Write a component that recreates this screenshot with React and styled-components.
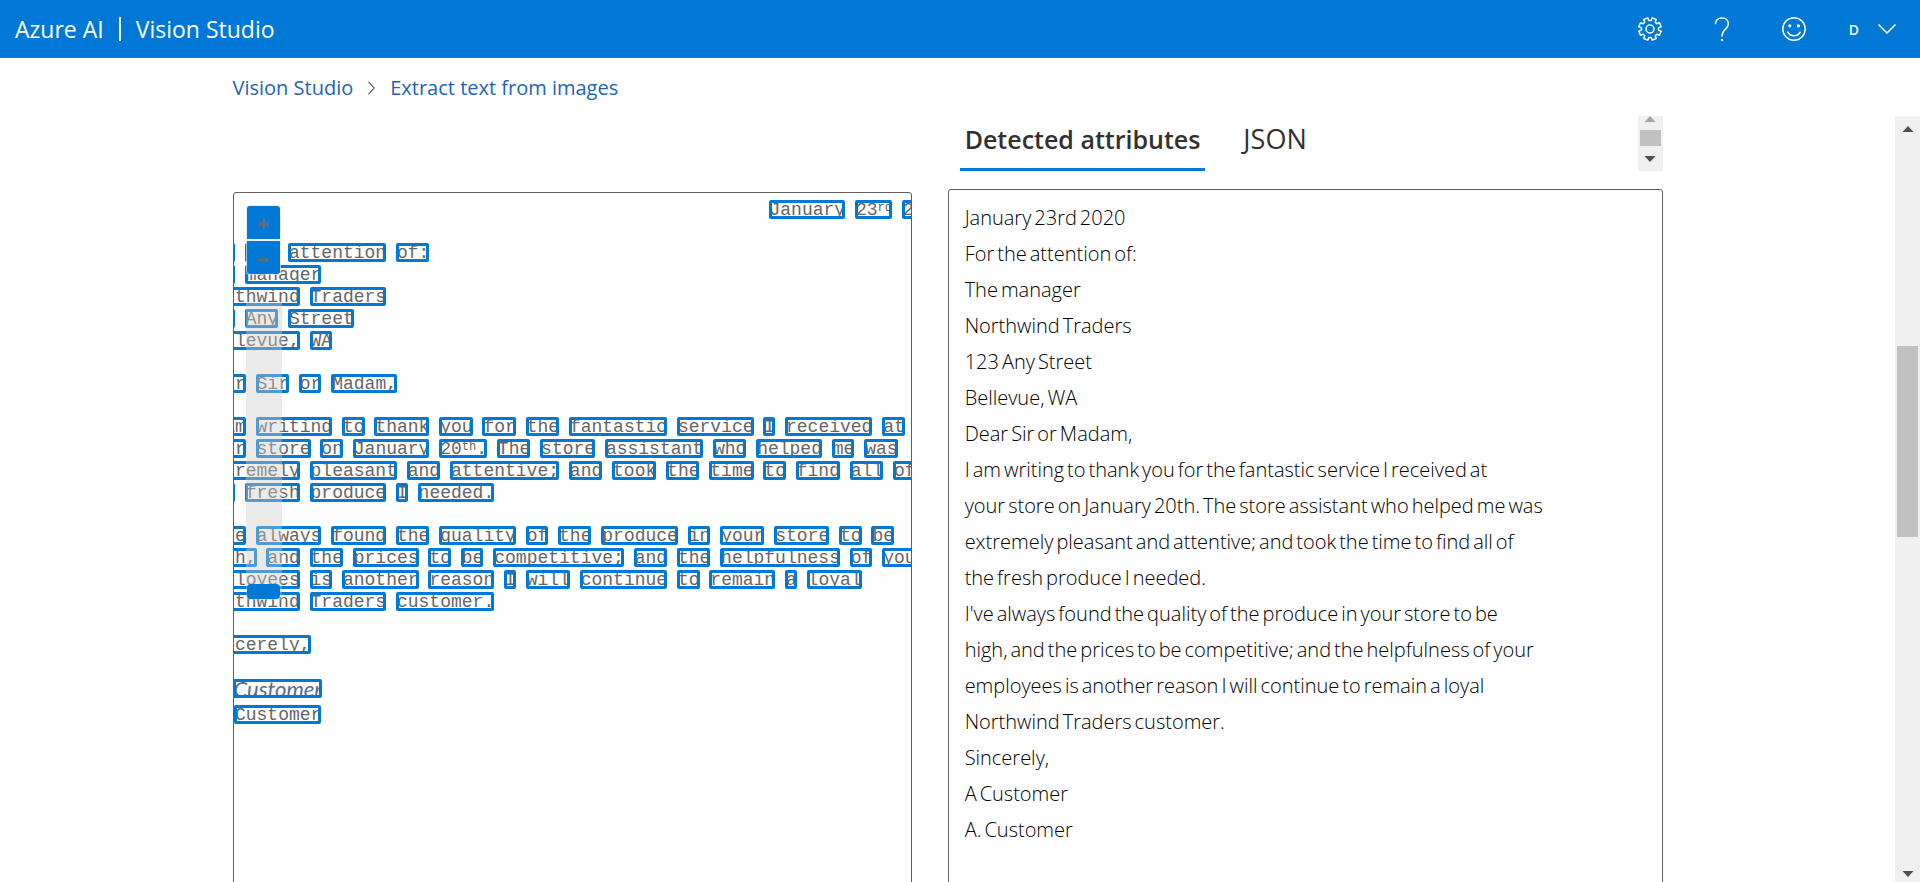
import React from "react";
import styled, { createGlobalStyle } from "styled-components";

const BLUE = "#0078d6";

const GlobalStyle = createGlobalStyle`
  * { box-sizing: border-box; }
  body {
    margin: 0;
    background: #fff;
    color: #323130;
    font-family: "Open Sans", "Noto Sans", sans-serif;
    overflow: hidden;
  }
  button { font: inherit; border: 0; padding: 0; background: none; color: inherit; cursor: pointer; }
`;

const Shell = styled.div`
  height: 100vh;
  display: flex;
  flex-direction: column;
`;

const Header = styled.header`
  flex: none;
  height: 58px;
  display: flex;
  align-items: center;
  justify-content: space-between;
  padding: 0 24px 0 15px;
  background: ${BLUE};
  color: #fff;
`;

const Brand = styled.div`
  display: flex;
  align-items: center;
  gap: 15px;
  font-size: 23px;
  line-height: 30px;
`;

const BrandDivider = styled.span`
  width: 2px;
  height: 24px;
  background: #fff;
`;

const HeaderActions = styled.div`
  display: flex;
  align-items: center;
  gap: 43px;
`;

const IconGroup = styled.div`
  display: flex;
  gap: 48px;
`;

const IconButton = styled.button`
  width: 24px;
  height: 24px;
  display: flex;
  align-items: center;
  justify-content: center;
`;

const AccountButton = styled.button`
  display: flex;
  align-items: center;
  gap: 19px;
  font-size: 14px;
  font-weight: 600;
`;

const Breadcrumb = styled.nav`
  flex: none;
  width: 100%;
  height: 58px;
  padding: 2px 25px 0 0;
  display: flex;
  justify-content: center;
`;

const Crumbs = styled.div`
  width: 100%;
  max-width: 1430px;
  display: flex;
  align-items: center;
  gap: 15px;
  font-size: 20px;
  line-height: 28px;
`;

const Crumb = styled.a`
  color: #1c64b8;
  text-decoration: none;
`;

const Viewport = styled.div`
  flex: 1;
  min-height: 0;
  display: flex;
`;

const Main = styled.main`
  flex: 1;
  min-width: 0;
  overflow: hidden;
  display: flex;
  justify-content: center;
  align-items: flex-start;
`;

const Columns = styled.div`
  width: 100%;
  max-width: 1430px;
  display: grid;
  grid-template-columns: minmax(0, 19fr) minmax(0, 20fr);
  column-gap: 36px;
`;

const PreviewColumn = styled.section`
  padding-top: 76px;
`;

const ResultColumn = styled.section`
  display: flex;
  flex-direction: column;
  gap: 18px;
`;

const Panel = styled.div`
  min-height: 860px;
  border: 1px solid #5f5e5d;
  border-radius: 3px;
  background: #fefefe;
`;

const ImagePanel = styled(Panel)`
  position: relative;
  overflow: hidden;
  padding-top: 6px;
`;

const Letter = styled.div`
  margin-left: -31px;
  display: flex;
  flex-direction: column;
  gap: 21px;
  color: #666;
  font-family: "Liberation Mono", monospace;
  font-size: 18px;
  line-height: 22px;
  white-space: pre;
`;

const Paragraph = styled.p`
  margin: 0;
`;

const LetterDate = styled(Paragraph)`
  padding-left: 567px;
`;

const LetterLine = styled.span`
  display: block;
  height: 22px;
`;

const Signature = styled.span`
  display: block;
  height: 27px;
  padding: 1px 0 0 12px;
  color: #5a6a92;
  font-family: Lato, sans-serif;
  font-size: 22px;
  font-style: italic;
`;

const WordBox = styled.span`
  position: relative;
  display: inline-block;
  height: 22px;

  &::after {
    content: "";
    position: absolute;
    inset: 1px 0 2px -1px;
    border: 3px solid ${BLUE};
    border-radius: 2px;
  }
`;

const Ordinal = styled.span`
  position: relative;
  top: -4px;
  font-size: 12px;
`;

const ZoomButtons = styled.div`
  position: absolute;
  top: 12px;
  left: 12px;
  display: flex;
  flex-direction: column;
  gap: 2px;
  padding: 1px;
  border-radius: 4px;
  background: rgba(230, 230, 230, 0.7);
`;

const ZoomButton = styled.button`
  width: 33px;
  height: 33px;
  border-radius: ${(p) => (p.$end === "top" ? "3px 3px 0 0" : "0 0 3px 3px")};
  background: ${BLUE};
  color: #6b6b6b;
  font-size: 22px;
  font-weight: 700;
  line-height: 33px;
`;

const ZoomSlider = styled.input`
  position: absolute;
  top: 110px;
  left: 12px;
  width: 36px;
  height: 297px;
  margin: 0;
  padding: 1px;
  appearance: none;
  writing-mode: vertical-lr;
  background: rgba(205, 205, 205, 0.4);

  &::-webkit-slider-thumb {
    appearance: none;
    width: 33px;
    height: 15px;
    border-radius: 4px;
    background: ${BLUE};
  }
`;

const TabBar = styled.div`
  height: 55px;
  display: flex;
  justify-content: space-between;
`;

const TabList = styled.div`
  display: flex;
  gap: 33px;
  padding-left: 12px;
`;

const Tab = styled.button`
  height: 55px;
  padding: 0 5px 7px;
  border-bottom: 3px solid ${(p) => (p.$active ? BLUE : "transparent")};
  color: #323130;
  font-size: ${(p) => (p.$active ? "25px" : "27px")};
  font-weight: ${(p) => (p.$active ? 600 : 400)};
  line-height: 34px;
`;

const TextPanel = styled(Panel)`
  padding: 10px 16px;
  color: #000;
  font-size: 20px;
  font-weight: 300;
`;

const TextLines = styled.ol`
  list-style: none;
  margin: 0;
  padding: 0;
`;

const TextLine = styled.li`
  display: flex;
  flex-wrap: wrap;
  column-gap: 3px;
  line-height: 36px;
`;

const ScrollTrack = styled.div`
  flex: none;
  width: 25px;
  display: flex;
  flex-direction: column;
  background: #f0f0f0;
`;

const ScrollArrow = styled.button`
  flex: none;
  height: ${(p) => p.$size}px;
  display: flex;
  align-items: center;
  justify-content: center;
`;

const ScrollSpace = styled.div`
  flex: ${(p) => p.$grow};
`;

const ScrollThumb = styled.div`
  flex: ${(p) => p.$grow};
  margin: 0 2px;
  background: #c1c1c1;
`;

const gearPoints = Array.from({ length: 8 }, (_, i) => {
  const mid = 22.5 + i * 45;
  return [[-15, 8.6], [-11, 11.4], [11, 11.4], [15, 8.6]]
    .map(([offset, r]) => {
      const a = ((mid + offset) * Math.PI) / 180;
      return `${(12 + r * Math.sin(a)).toFixed(2)},${(12 - r * Math.cos(a)).toFixed(2)}`;
    })
    .join(" ");
}).join(" ");

function GearIcon() {
  return (
    <svg width="24" height="24" viewBox="0 0 24 24" fill="none" stroke="#fff" strokeWidth="1.5" strokeLinejoin="round" aria-hidden="true">
      <polygon points={gearPoints} />
      <circle cx="12" cy="12" r="4" />
    </svg>
  );
}

function HelpIcon() {
  return (
    <svg width="16" height="24" viewBox="0 0 16 24" fill="none" stroke="#fff" strokeWidth="1.5" aria-hidden="true">
      <path d="M1.4 7.2C1.4 3.3 4.2 0.9 7.8 0.9C11.6 0.9 14.4 3.2 14.4 6.8C14.4 12.2 8 12 8 19.4" />
      <path d="M8 22v2" strokeWidth="2" />
    </svg>
  );
}

function SmileIcon() {
  return (
    <svg width="24" height="24" viewBox="0 0 24 24" fill="none" stroke="#fff" strokeWidth="1.5" aria-hidden="true">
      <circle cx="12" cy="12" r="11.2" />
      <path d="M5.6 14.6C6.8 17.2 9.2 18.7 12 18.7C14.8 18.7 17.2 17.2 18.4 14.6" />
      <circle cx="7.8" cy="8.8" r="1.6" fill="#fff" stroke="none" />
      <circle cx="16.4" cy="8.8" r="1.6" fill="#fff" stroke="none" />
    </svg>
  );
}

function ChevronDownIcon() {
  return (
    <svg width="18" height="10" viewBox="0 0 18 10" fill="none" stroke="#fff" strokeWidth="1.5" aria-hidden="true">
      <path d="M0.5 0.5L9 9L17.5 0.5" />
    </svg>
  );
}

function ChevronRightIcon() {
  return (
    <svg width="7" height="14" viewBox="0 0 7 14" fill="none" stroke="#555" strokeWidth="1.1" aria-hidden="true">
      <path d="M0.5 0.8L6.2 7L0.5 13.2" />
    </svg>
  );
}

function Triangle({ up, color = "#505050" }) {
  return (
    <svg width="12" height="6" viewBox="0 0 12 6" fill={color} aria-hidden="true">
      <path d={up ? "M0.5 6L6 0L11.5 6Z" : "M0.5 0L6 6L11.5 0Z"} />
    </svg>
  );
}

const letterParagraphs = [
  ["For the attention of:", "The manager", "Northwind Traders", "123 Any Street", "Bellevue, WA"],
  ["Dear Sir or Madam,"],
  [
    "I am writing to thank you for the fantastic service I received at",
    "your store on January 20^th. The store assistant who helped me was",
    "extremely pleasant and attentive; and took the time to find all of",
    "the fresh produce I needed.",
  ],
  [
    "I've always found the quality of the produce in your store to be",
    "high, and the prices to be competitive; and the helpfulness of your",
    "employees is another reason I will continue to remain a loyal",
    "Northwind Traders customer.",
  ],
  ["Sincerely,"],
];

const detectedLines = [
  "January 23rd 2020",
  "For the attention of:",
  "The manager",
  "Northwind Traders",
  "123 Any Street",
  "Bellevue, WA",
  "Dear Sir or Madam,",
  "I am writing to thank you for the fantastic service I received at",
  "your store on January 20th. The store assistant who helped me was",
  "extremely pleasant and attentive; and took the time to find all of",
  "the fresh produce I needed.",
  "I've always found the quality of the produce in your store to be",
  "high, and the prices to be competitive; and the helpfulness of your",
  "employees is another reason I will continue to remain a loyal",
  "Northwind Traders customer.",
  "Sincerely,",
  "A Customer",
  "A. Customer",
];

// A caret marks a two-letter ordinal suffix that is set raised and smaller.
function Word({ text }) {
  const [base, rest] = text.split("^");
  return (
    <WordBox>
      {base}
      {rest && <Ordinal>{rest.slice(0, 2)}</Ordinal>}
      {rest && rest.slice(2)}
    </WordBox>
  );
}

function Words({ text }) {
  return text.split(" ").map((word, i) => (
    <React.Fragment key={i}>
      {i > 0 && " "}
      <Word text={word} />
    </React.Fragment>
  ));
}

export default function App() {
  return (
    <Shell>
      <GlobalStyle />
      <Header>
        <Brand>
          <span>Azure AI</span>
          <BrandDivider />
          <span>Vision Studio</span>
        </Brand>
        <HeaderActions>
          <IconGroup>
            <IconButton aria-label="Settings"><GearIcon /></IconButton>
            <IconButton aria-label="Help"><HelpIcon /></IconButton>
            <IconButton aria-label="Feedback"><SmileIcon /></IconButton>
          </IconGroup>
          <AccountButton aria-label="Account">
            <span>D</span>
            <ChevronDownIcon />
          </AccountButton>
        </HeaderActions>
      </Header>
      <Breadcrumb aria-label="Breadcrumb">
        <Crumbs>
          <Crumb href="#home">Vision Studio</Crumb>
          <ChevronRightIcon />
          <Crumb href="#extract">Extract text from images</Crumb>
        </Crumbs>
      </Breadcrumb>
      <Viewport>
        <Main>
          <Columns>
            <PreviewColumn>
              <ImagePanel>
                <Letter>
                  <LetterDate>
                    <LetterLine><Words text="January 23^rd 2020" /></LetterLine>
                  </LetterDate>
                  {letterParagraphs.map((lines, i) => (
                    <Paragraph key={i}>
                      {lines.map((line) => (
                        <LetterLine key={line}><Words text={line} /></LetterLine>
                      ))}
                    </Paragraph>
                  ))}
                  <Paragraph>
                    <Signature><Words text="A Customer" /></Signature>
                    <LetterLine><Words text="A. Customer" /></LetterLine>
                  </Paragraph>
                </Letter>
                <ZoomButtons>
                  <ZoomButton $end="top" aria-label="Zoom in">+</ZoomButton>
                  <ZoomButton $end="bottom" aria-label="Zoom out">–</ZoomButton>
                </ZoomButtons>
                <ZoomSlider type="range" min="0" max="100" defaultValue="100" aria-label="Zoom level" />
              </ImagePanel>
            </PreviewColumn>
            <ResultColumn>
              <TabBar>
                <TabList role="tablist">
                  <Tab role="tab" aria-selected="true" $active>Detected attributes</Tab>
                  <Tab role="tab" aria-selected="false">JSON</Tab>
                </TabList>
                <ScrollTrack>
                  <ScrollArrow $size={6} aria-label="Scroll tabs up"><Triangle up color="#a3a3a3" /></ScrollArrow>
                  <ScrollSpace $grow={8} />
                  <ScrollThumb $grow={16} />
                  <ScrollArrow $size={25} aria-label="Scroll tabs down"><Triangle /></ScrollArrow>
                </ScrollTrack>
              </TabBar>
              <TextPanel>
                <TextLines>
                  {detectedLines.map((line) => (
                    <TextLine key={line}>
                      {line.split(" ").map((word, i) => (
                        <span key={i}>{word}</span>
                      ))}
                    </TextLine>
                  ))}
                </TextLines>
              </TextPanel>
            </ResultColumn>
          </Columns>
        </Main>
        <ScrollTrack>
          <ScrollArrow $size={25} aria-label="Scroll up"><Triangle up /></ScrollArrow>
          <ScrollSpace $grow={205} />
          <ScrollThumb $grow={191} />
          <ScrollSpace $grow={329} />
          <ScrollArrow $size={16} aria-label="Scroll down"><Triangle /></ScrollArrow>
        </ScrollTrack>
      </Viewport>
    </Shell>
  );
}
